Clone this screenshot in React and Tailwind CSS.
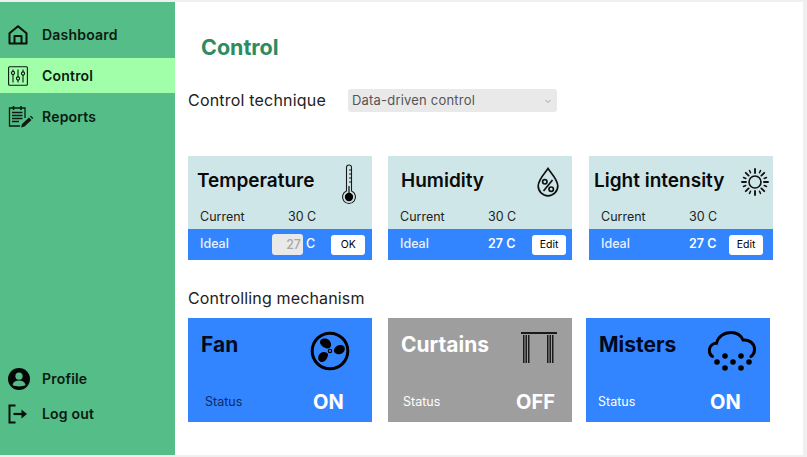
const fontStack = "font-['Inter','Noto_Sans',sans-serif]";

const HomeIcon = () => (
    <svg width="20" height="20" viewBox="0 0 20 20" fill="none" stroke="#06120c" strokeWidth="2" strokeLinejoin="round">
        <path d="M1.500 18.500V8.200L10 1.300l8.500 6.900v10.300z" />
        <path d="M6.500 18.500v-7.500h7v7.500" />
    </svg>
);

const SlidersIcon = () => (
    <svg width="20" height="20" viewBox="0 0 20 20" fill="none" stroke="#0b1a12" strokeWidth="1.100">
        <rect x="0.600" y="0.800" width="18.800" height="18.400" rx="1" />
        <path d="M5 3.500v13M10 3.500v13M15 3.500v13" />
        <circle cx="5" cy="7" r="1.600" fill="#a0ffa8" />
        <circle cx="10" cy="12.500" r="1.600" fill="#a0ffa8" />
        <circle cx="15" cy="7.500" r="1.600" fill="#a0ffa8" />
    </svg>
);

const ReportIcon = () => (
    <svg width="26" height="24" viewBox="0 0 26 24" fill="none" stroke="#0b1a12" strokeWidth="1.300">
        <path d="M12 21H1.500V3H17v10" />
        <path d="M5.500 1v4M13 1v4" strokeWidth="1.600" />
        <path d="M4 7.500h10.500M4 10.500h10.500M4 13.500h10.500M4 16.500h7" strokeWidth="1.400" />
        <path d="M13 22.500l1-3.500 7-6.500 2.500 2.600-7 6.400z" fill="#0b1a12" stroke="none" />
        <path d="M22 11.600l1-0.900 2.300 2.400-1 1z" fill="#0b1a12" stroke="none" />
    </svg>
);

const ProfileIcon = () => (
    <svg width="22" height="22" viewBox="0 0 22 22">
        <circle cx="11" cy="11" r="11" fill="#040806" />
        <circle cx="11" cy="8.200" r="3.600" fill="#55bd87" />
        <path d="M4.500 17c.8-3.200 3.400-4.400 6.500-4.400s5.700 1.200 6.500 4.400c-1.500 1-4 1.400-6.500 1.400s-5-.4-6.500-1.400z" fill="#55bd87" />
    </svg>
);

const LogoutIcon = () => (
    <svg width="20" height="20" viewBox="0 0 20 20" fill="none" stroke="#06120c" strokeWidth="2">
        <path d="M7.500 1.500H1.500v17h6" />
        <path d="M5.500 10h10" strokeWidth="2.200" />
        <path d="M13.500 5.500l5.500 4.500-5.500 4.500z" fill="#06120c" stroke="none" />
    </svg>
);

const ThermometerIcon = () => (
    <svg width="16" height="42" viewBox="0 0 16 42" fill="none" stroke="#1a1a1a" strokeWidth="1.100">
        <path d="M5.500 27V3.500a2.500 2.500 0 0 1 5 0V27a6.500 6.500 0 1 1-5 0z" />
        <path d="M8 6h2.500M8 10h2.500M8 14h2.500M8 18h2.500" />
        <path d="M8 22v10" strokeWidth="1.300" />
        <circle cx="8" cy="33" r="4.200" fill="#000" stroke="none" />
    </svg>
);

const DropIcon = () => (
    <svg width="22" height="30" viewBox="0 0 22 30" fill="none" stroke="#111" strokeWidth="1.700">
        <path d="M11 1.500C8 6 1.200 12.500 1.200 19a9.800 9.800 0 0 0 19.600 0C20.800 12.500 14 6 11 1.500z" />
        <circle cx="7.800" cy="14.800" r="2.200" />
        <circle cx="14.200" cy="22.200" r="2.200" />
        <path d="M15.500 13L6.500 24" />
    </svg>
);

const SunIcon = () => (
    <svg width="28" height="28" viewBox="0 0 28 28" fill="none" stroke="#111" strokeWidth="1.900" strokeLinecap="round">
        <circle cx="14" cy="14" r="6" strokeWidth="1.600" />
        <path d="M14 1v4M14 23v4M1 14h4M23 14h4M4.800 4.800l2.800 2.800M20.400 20.400l2.800 2.800M23.200 4.800l-2.800 2.800M7.600 20.400l-2.800 2.800" />
        <path d="M8.500 2.500l1 2.300M19.500 2.500l-1 2.300M8.500 25.500l1-2.300M19.500 25.500l-1-2.300M2.500 9.500l2.300 1M2.500 18.500l2.300-1M25.500 9.500l-2.300 1M25.500 18.500l-2.300-1" strokeWidth="1.500" />
    </svg>
);

const FanIcon = () => (
    <svg width="40" height="40" viewBox="0 0 40 40">
        <circle cx="20" cy="20" r="17.800" fill="none" stroke="#000" strokeWidth="3" />
        <path d="M17.500 17.500c-3.500-.5-7-3-7.500-6-.4-2.800 2.500-4.500 5.500-4 3.500.6 6 3.500 5.500 7-.3 2-1.800 3.200-3.500 3z" />
        <path d="M24 18.500c1-3.200 4.500-5 7.500-4.500 2.800.5 4 3 3 5.500-1.100 3-4.500 4.500-7.500 3.500-2.300-.8-3.500-2.500-3-4.500z" />
        <path d="M18 24c-.5 3.500-3 7-6 7-2.800 0-4.300-2.500-3.700-5.300.7-3.200 3.700-5 6.700-4.500 2 .3 3.200 1.300 3 2.800z" />
        <circle cx="20" cy="20" r="1.700" fill="none" stroke="#000" strokeWidth="1.200" />
    </svg>
);

const CurtainsIcon = () => (
    <svg width="36" height="32" viewBox="0 0 36 32" fill="#1a1a1a">
        <rect x="0" y="0" width="36" height="2" />
        <rect x="2" y="3" width="1.500" height="28" />
        <rect x="4.500" y="3" width="1.500" height="28" />
        <rect x="7" y="3" width="1.500" height="28" />
        <rect x="26" y="3" width="1.500" height="28" />
        <rect x="28.500" y="3" width="1.500" height="28" />
        <rect x="31" y="3" width="1.500" height="28" />
    </svg>
);

const CloudIcon = () => (
    <svg width="48" height="40" viewBox="0 0 48 40">
        <path d="M4.500 25.500C2 24 1 21 1.500 18c.7-3.500 3.500-5.800 7-5.700C10 5.500 16 1.500 23 1.500c5.500 0 10 3 12 7.500 6-.7 11 3 11.500 8.500.3 3.500-1 6.200-3.500 8" fill="none" stroke="#000" strokeWidth="3" strokeLinecap="round" />
        <g fill="#000">
            <circle cx="17" cy="25" r="2.800" />
            <circle cx="33" cy="25" r="2.800" />
            <circle cx="9" cy="31" r="2.800" />
            <circle cx="25" cy="31" r="2.800" />
            <circle cx="41" cy="31" r="2.800" />
            <circle cx="17" cy="37" r="2.800" />
            <circle cx="33" cy="37" r="2.800" />
        </g>
    </svg>
);

const NavItem = ({icon, label, active, className}) => (
    <div className={`flex items-center h-[35px] pl-[8px] ${active ? "bg-[#a0ffa8]" : ""} ${className || ""}`}>
        <div className="w-[34px] flex items-center">{icon}</div>
        <span className="text-[14px] font-semibold tracking-[0.2px] text-[#0b1a12]">{label}</span>
    </div>
);

const SensorCard = ({title, icon, editing, titleClass, className, editClass}) => (
    <div className={`w-[184px] h-[104px] bg-[#cfe6e8] flex flex-col ${className || ""}`}>
        <div className="flex-1 relative">
            <div className={`absolute top-[11px] text-[19px] font-semibold text-[#0a0a0a] ${titleClass}`}>{title}</div>
            {icon}
            <div className="absolute top-[52px] left-[12px] text-[12.500px] text-[#222]">Current</div>
            <div className="absolute top-[52px] left-[100px] text-[12.500px] text-[#222]">30 C</div>
        </div>
        <div className="h-[31px] bg-[#3385ff] flex items-center pl-[12px] text-white text-[12.500px] font-medium">
            <span className="w-[72px] shrink-0 text-[#e8f1ff]">Ideal</span>
            {editing ? (
                <>
                    <span className="w-[31px] h-[21px] bg-[#e9e9e9] rounded-[3px] text-[#a8a8a8] text-right pr-[2px] leading-[21px]">27</span>
                    <span className="ml-[3px]">C</span>
                    <button className="ml-[16px] w-[34px] h-[20px] bg-white rounded-[3px] text-black text-[10.500px] font-normal">OK</button>
                </>
            ) : (
                <>
                    <span className="ml-[16px] w-[44px] shrink-0 whitespace-nowrap font-semibold">27 C</span>
                    <button className={`w-[34px] h-[20px] bg-white rounded-[3px] text-black text-[10.500px] font-normal ${editClass}`}>Edit</button>
                </>
            )}
        </div>
    </div>
);

const DeviceCard = ({name, status, icon, off, statusDark, nameDark, className, statusClass, valueClass}) => (
    <div className={`w-[184px] h-[104px] relative ${off ? "bg-[#9e9e9e]" : "bg-[#3385ff]"} ${className || ""}`}>
        <div className={`absolute top-[11px] left-[13px] text-[21px] font-bold ${nameDark ? "text-[#000a1f]" : "text-white"}`}>{name}</div>
        {icon}
        <div className={`absolute top-[75px] text-[12.500px] ${statusClass} ${statusDark ? "text-[#0c2a66]" : "text-white"}`}>Status</div>
        <div className={`absolute top-[69px] text-[20px] font-bold text-white ${valueClass}`}>{status}</div>
    </div>
);

const App = () =>
{
    return (
        <div className={`w-[807px] h-[457px] bg-[#efefef] pt-[2px] pb-[2px] pr-[4px] flex overflow-hidden ${fontStack}`}>
            <aside className="w-[175px] bg-[#55bd87] flex flex-col pt-[15px] pb-[24px]">
                <NavItem icon={<HomeIcon />} label="Dashboard" />
                <NavItem icon={<SlidersIcon />} label="Control" active className="mt-[6px]" />
                <NavItem icon={<ReportIcon />} label="Reports" className="mt-[6px]" />
                <div className="flex-1" />
                <NavItem icon={<ProfileIcon />} label="Profile" />
                <NavItem icon={<LogoutIcon />} label="Log out" />
            </aside>
            <main className="flex-1 bg-white pl-[13px] flex flex-col">
                <h1 className="mt-[31px] ml-[13px] text-[21.500px] leading-[28px] font-bold text-[#2e8b5e]">Control</h1>
                <div className="mt-[27px] flex items-center h-[24px]">
                    <span className="w-[160px] text-[16px] tracking-[0.2px] text-[#222]">Control technique</span>
                    <div className="w-[209px] h-[23px] bg-[#e9e9e9] rounded-[3px] flex items-center justify-between pl-[4px] pr-[5px] pt-[1px] text-[13px] tracking-[0.2px] text-[#555]">
                        <span>Data-driven control</span>
                        <svg width="8" height="8" viewBox="0 0 8 8" fill="none" stroke="#999" strokeWidth="0.900"><path d="M1.500 3l2.500 2.500L6.500 3" /></svg>
                    </div>
                </div>
                <div className="mt-[44px] flex">
                    <SensorCard title="Temperature" editing titleClass="left-[9px]"
                        icon={<div className="absolute top-[8px] left-[153px]"><ThermometerIcon /></div>} />
                    <SensorCard title="Humidity" titleClass="left-[13px]" className="ml-[16px]" editClass="ml-0"
                        icon={<div className="absolute top-[11px] left-[149px]"><DropIcon /></div>} />
                    <SensorCard title="Light intensity" titleClass="left-[5px]" className="ml-[17px]" editClass="ml-[-4px]"
                        icon={<div className="absolute top-[12px] left-[152px]"><SunIcon /></div>} />
                </div>
                <div className="mt-[28px] text-[16px] leading-[20px] tracking-[0.15px] text-[#222]">Controlling mechanism</div>
                <div className="mt-[10px] flex">
                    <DeviceCard name="Fan" status="ON" nameDark statusDark statusClass="left-[17px]" valueClass="left-[125px]"
                        icon={<div className="absolute top-[13px] left-[122px]"><FanIcon /></div>} />
                    <DeviceCard name="Curtains" status="OFF" off statusClass="left-[15px]" valueClass="left-[128px]" className="ml-[16px]"
                        icon={<div className="absolute top-[14px] left-[133px]"><CurtainsIcon /></div>} />
                    <DeviceCard name="Misters" status="ON" nameDark statusClass="left-[12px]" valueClass="left-[124px]" className="ml-[14px]"
                        icon={<div className="absolute top-[13px] left-[122px]"><CloudIcon /></div>} />
                </div>
            </main>
        </div>
    );
};

export default App;
